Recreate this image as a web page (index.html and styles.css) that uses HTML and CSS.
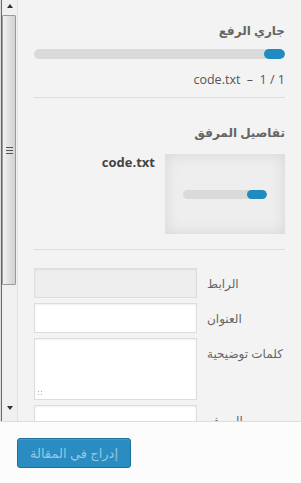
FILE: index.html
```html
<!DOCTYPE html>
<html lang="ar" dir="rtl">
<head>
    <meta charset="UTF-8">
    <meta name="viewport" content="width=device-width, initial-scale=1.0">
    <title>تفاصيل المرفق</title>
    <link rel="stylesheet" href="styles.css">
</head>
<body>
    <div class="frame">
        <div class="pane">
            <aside class="sidebar">
                <h2>جاري الرفع</h2>
                <div class="progress"><div class="bar"></div></div>
                <div class="upload-file" dir="ltr">code.txt &nbsp;–&nbsp; 1 / 1</div>

                <hr class="sep">

                <h2 class="details-title">تفاصيل المرفق</h2>
                <div class="details">
                    <div class="thumb">
                        <div class="progress small"><div class="bar"></div></div>
                    </div>
                    <div class="filename" dir="ltr">code.txt</div>
                </div>

                <hr class="sep">

                <div class="settings">
                    <label class="setting">
                        <span class="name">الرابط</span>
                        <input type="text" class="field readonly" readonly>
                    </label>
                    <label class="setting">
                        <span class="name">العنوان</span>
                        <input type="text" class="field">
                    </label>
                    <label class="setting">
                        <span class="name">كلمات توضيحية</span>
                        <span class="area-wrap"><textarea class="field area"></textarea></span>
                    </label>
                    <label class="setting">
                        <span class="name">الوصف</span>
                        <input type="text" class="field">
                    </label>
                </div>
            </aside>

            <div class="scrollbar" dir="ltr">
                <div class="sb-btn up"></div>
                <div class="sb-thumb"><span class="grip"></span></div>
                <div class="sb-track"></div>
                <div class="sb-btn down"></div>
            </div>
        </div>

        <div class="toolbar" dir="ltr">
            <button class="insert" disabled>إدراج في المقالة</button>
        </div>
    </div>
</body>
</html>
```

FILE: styles.css
```css
* {
    margin: 0;
    padding: 0;
    box-sizing: border-box;
}

body {
    font-family: "Open Sans", "DejaVu Sans", sans-serif;
    background: #fcfcfc;
    color: #444;
    width: 301px;
    height: 483px;
    overflow: hidden;
}

.frame {
    display: flex;
    flex-direction: column;
    height: 483px;
}

.pane {
    display: flex;
    height: 421px;
    overflow: hidden;
    background: #f3f3f3;
    border-left: 1px solid #ddd;
}

.scrollbar {
    width: 17px;
    flex: none;
    display: flex;
    flex-direction: column;
    background: #f0f0f0;
    border-left: 1px solid #6a6a6a;
    border-right: 1px solid #e2e2e2;
}

.sb-btn {
    height: 15px;
    flex: none;
    position: relative;
}

.sb-btn::after {
    content: '';
    position: absolute;
    left: 5px;
    border-left: 3px solid transparent;
    border-right: 3px solid transparent;
}

.sb-btn.up::after {
    top: 4px;
    border-bottom: 4px solid #333;
}

.sb-btn.down {
    margin-bottom: 6px;
}

.sb-btn.down::after {
    top: 6px;
    border-top: 4px solid #333;
}

.sb-thumb {
    height: 270px;
    margin: 0 1px 0 0;
    border: 1px solid #9a9a9a;
    border-radius: 1px;
    background: linear-gradient(to right, #f2f2f2 0%, #e4e4e4 40%, #d2d2d2 100%);
    display: flex;
    align-items: center;
    justify-content: center;
}

.grip {
    width: 7px;
    height: 7px;
    background: repeating-linear-gradient(to bottom, #555 0 1px, transparent 1px 3px);
}

.sb-track {
    flex: 1;
}

.sidebar {
    flex: 1;
    padding: 24px 16px 0 16px;
}

h2 {
    font-size: 12px;
    font-weight: bold;
    color: #666;
    line-height: 14px;
    margin-bottom: 11px;
}

.progress {
    height: 10px;
    background: #dadada;
    border-radius: 10px;
    overflow: hidden;
}

.progress .bar {
    width: 21px;
    height: 100%;
    background: #1e8cbe;
    border-radius: 10px;
}

.upload-file {
    margin-top: 14px;
    font-size: 12.5px;
    line-height: 14px;
    color: #555;
    text-align: right;
}

.sep {
    border: none;
    border-top: 1px solid #ddd;
    margin: 10px 0 0;
}

.details-title {
    margin-top: 28px;
    margin-bottom: 14px;
}

.details {
    display: flex;
    gap: 10px;
    align-items: flex-start;
}

.thumb {
    width: 120px;
    height: 80px;
    background: #eee;
    box-shadow: inset 0 0 15px rgba(0, 0, 0, 0.1);
    display: flex;
    align-items: center;
    justify-content: center;
}

.progress.small {
    width: 84px;
    height: 9px;
}

.progress.small .bar {
    width: 20px;
}

.filename {
    font-size: 13px;
    font-weight: bold;
    color: #444;
    line-height: 14px;
    margin-top: 1px;
}

.details + .sep {
    margin-top: 15px;
}

.settings {
    margin-top: 18px;
    display: flex;
    flex-direction: column;
    gap: 5px;
}

.setting {
    display: grid;
    grid-template-columns: 1fr 163px;
    align-items: start;
}

.name {
    font-size: 12px;
    color: #666;
    text-align: left;
    padding: 9px 0 0 10px;
    line-height: 14px;
}

.field {
    display: block;
    width: 163px;
    height: 30px;
    border: 1px solid #ddd;
    background: #fff;
    box-shadow: inset 0 1px 2px rgba(0, 0, 0, 0.07);
    font: inherit;
    outline: none;
}

.field.readonly {
    background: #eee;
}

.area-wrap {
    display: block;
    position: relative;
}

.field.area {
    height: 62px;
    resize: none;
}

/* resize grip dots in the bottom corner */
.area-wrap::after {
    content: '';
    position: absolute;
    left: 3px;
    bottom: 3px;
    width: 7px;
    height: 7px;
    background: radial-gradient(circle, #aaa 0.7px, transparent 0.9px) 0 0 / 3px 3px;
}

.toolbar {
    flex: 1;
    background: #fcfcfc;
    border-top: 1px solid #ddd;
    padding: 16px 0 0 17px;
}

.insert {
    width: 114px;
    height: 30px;
    background: #2b8cc1;
    border: 1px solid #1d6f9c;
    border-radius: 3px;
    color: #93c8e4;
    font-family: inherit;
    font-size: 13px;
    box-shadow: inset 0 1px 0 rgba(120, 200, 230, 0.3);
}
```
